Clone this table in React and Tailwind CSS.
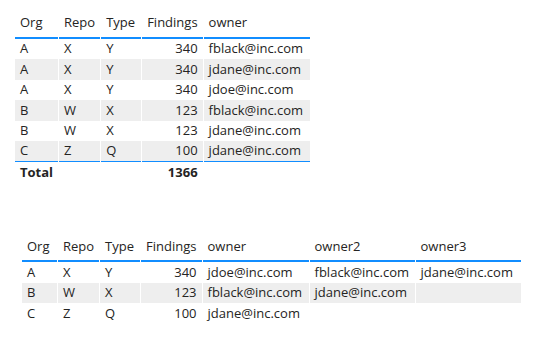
const rows1 = [
  ['A', 'X', 'Y', 340, 'fblack@inc.com'],
  ['A', 'X', 'Y', 340, 'jdane@inc.com'],
  ['A', 'X', 'Y', 340, 'jdoe@inc.com'],
  ['B', 'W', 'X', 123, 'fblack@inc.com'],
  ['B', 'W', 'X', 123, 'jdane@inc.com'],
  ['C', 'Z', 'Q', 100, 'jdane@inc.com'],
];

const rows2 = [
  ['A', 'X', 'Y', 340, 'jdoe@inc.com', 'fblack@inc.com', 'jdane@inc.com'],
  ['B', 'W', 'X', 123, 'fblack@inc.com', 'jdane@inc.com', ''],
  ['C', 'Z', 'Q', 100, 'jdane@inc.com', '', ''],
];

function Grid({ cols, rows, total, className }) {
  return (
    <table className={`table-fixed border-separate border-spacing-x-px border-spacing-y-0 ${className}`}>
      <colgroup>
        {cols.map((c) => (
          <col key={c.name} style={{ width: c.w }} />
        ))}
      </colgroup>
      <thead>
        <tr>
          {cols.map((c) => (
            <th
              key={c.name}
              className={`h-[23px] border-b-2 border-[#118dff] px-[5px] pb-[4px] align-bottom font-normal whitespace-nowrap ${
                c.num ? 'text-right' : 'text-left'
              }`}
            >
              {c.name}
            </th>
          ))}
        </tr>
      </thead>
      <tbody>
        {rows.map((r, i) => (
          <tr key={i} className={i % 2 ? 'bg-[#eeeeee]' : ''}>
            {r.map((v, j) => (
              <td
                key={j}
                className={`h-[20.5px] px-[5px] whitespace-nowrap ${
                  cols[j].num ? 'text-right' : 'text-left'
                } ${total && i === rows.length - 1 ? 'border-b border-[#118dff]' : ''}`}
              >
                {v}
              </td>
            ))}
          </tr>
        ))}
        {total && (
          <tr className="font-bold">
            <td className="h-[22px] px-[5px]">Total</td>
            <td />
            <td />
            <td className="px-[5px] text-right">{total}</td>
            <td />
          </tr>
        )}
      </tbody>
    </table>
  );
}

export default function App() {
  const cols1 = [
    { name: 'Org', w: 42 },
    { name: 'Repo', w: 41 },
    { name: 'Type', w: 40 },
    { name: 'Findings', w: 60, num: true },
    { name: 'owner', w: 106 },
  ];
  const cols2 = [
    { name: 'Org', w: 35 },
    { name: 'Repo', w: 40 },
    { name: 'Type', w: 40 },
    { name: 'Findings', w: 59, num: true },
    { name: 'owner', w: 106 },
    { name: 'owner2', w: 105 },
    { name: 'owner3', w: 105 },
  ];
  return (
    <div className="h-[339px] w-[546px] bg-white font-['Open_Sans','Noto_Sans',sans-serif] text-[13px] text-[#252423]">
      <Grid cols={cols1} rows={rows1} total={1366} className="ml-[14px] pt-[13px]" />
      <Grid cols={cols2} rows={rows2} className="ml-[21px] mt-[53px]" />
    </div>
  );
}
